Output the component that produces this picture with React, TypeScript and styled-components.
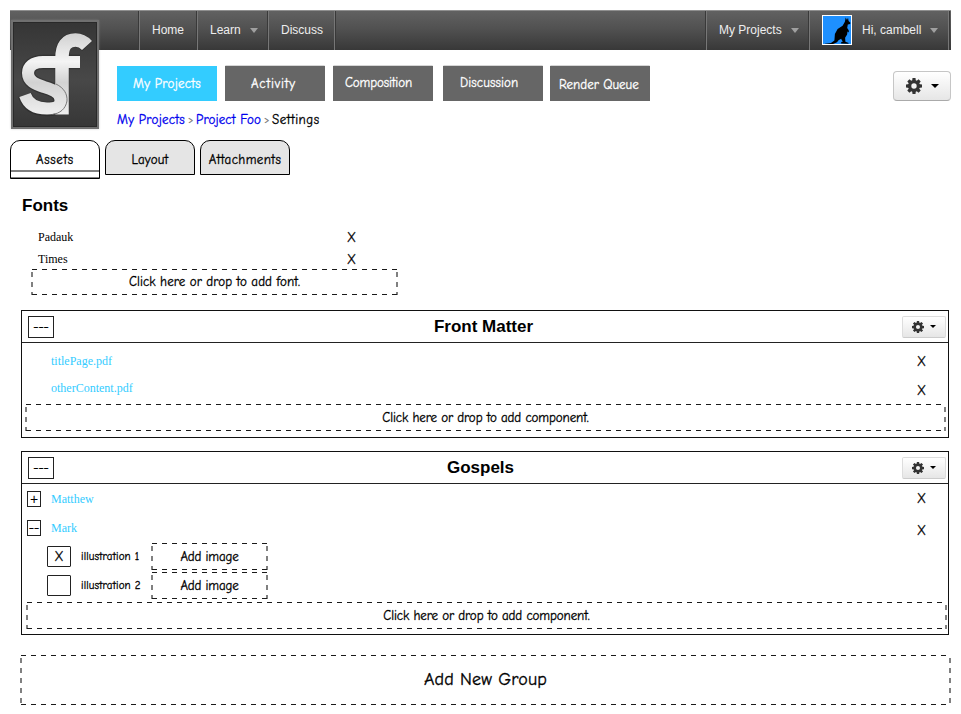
import React from 'react';
import styled, { createGlobalStyle, css } from 'styled-components';

const GlobalStyle = createGlobalStyle`
  * { box-sizing: border-box; }
  body { margin: 0; background: #fff; color: #000; }
`;

const hand = css`
  font-family: "Comic Neue", Lato, sans-serif;
  font-variant-ligatures: none;
  -webkit-text-stroke: 0.3px currentColor;
`;

const Hand = styled.span<{ $size?: number; $track?: number; $color?: string }>`
  ${hand}
  font-size: ${p => p.$size ?? 13}px;
  line-height: 20px;
  letter-spacing: ${p => p.$track ?? 0}px;
  color: ${p => p.$color ?? '#000'};
  white-space: nowrap;
`;

const Page = styled.div`
  width: 961px;
  height: 714px;
  padding: 10px 10px 0;
  overflow: hidden;
`;

const NavBar = styled.nav`
  position: relative;
  display: flex;
  height: 40px;
  padding: 0 1px 0 129px;
  border-top: 1px solid #8f8f8f;
  background: linear-gradient(#616161, #515151 45%, #383838);
`;

const NavItem = styled.div<{ $width: number }>`
  display: flex;
  align-items: center;
  width: ${p => p.$width}px;
  padding: 0 0 2px 12px;
  border-left: 1px solid #777;
  box-shadow: -1px 0 0 #393939;
  font: 12px "Liberation Sans", sans-serif;
  color: #eee;
  white-space: nowrap;
`;

const NavEdge = styled.div<{ $push?: boolean }>`
  width: 2px;
  border-left: 1px solid #777;
  border-right: 1px solid #393939;
  margin-right: ${p => (p.$push ? 'auto' : '0')};
`;

const NavCaret = styled.i`
  margin: 1px 0 0 9px;
  border: 4.5px solid transparent;
  border-top: 5px solid #a0a0a0;
  border-bottom: 0;
`;

const Avatar = styled.svg`
  width: 30px;
  height: 30px;
  margin: 1px 10px 0 0;
  border: 1px solid #fff;
  background: #1e90ff;
`;

const Logo = styled.svg`
  position: absolute;
  left: 1px;
  top: 9px;
  width: 88px;
  height: 110px;
  filter: drop-shadow(0 0 1px #9997);
`;

const Toolbar = styled.div`
  display: flex;
  height: 51px;
  padding: 16px 0 0 107px;
`;

const ProjectTab = styled.div<{ $active?: boolean; $after: number; $x: number; $y: number }>`
  width: 100px;
  height: 35px;
  margin-right: ${p => p.$after}px;
  padding: ${p => p.$y}px 0 0 ${p => p.$x}px;
  background: ${p => (p.$active ? '#33ccff' : '#666')};
  box-shadow: ${p => (p.$active ? 'none' : '0 -1px 0 -0.4px #bbb')};
`;

const GearButton = styled.div<{ $large?: boolean }>`
  display: flex;
  align-items: center;
  justify-content: center;
  gap: ${p => (p.$large ? 9 : 6)}px;
  width: ${p => (p.$large ? 58 : 44)}px;
  height: ${p => (p.$large ? 30 : 22)}px;
  margin: ${p => (p.$large ? '5px 0 0 auto' : '0 2px 0 0')};
  border: 1px solid ${p => (p.$large ? '#c6c6c6' : '#ddd')};
  border-bottom-color: ${p => (p.$large ? '#aaa' : '#ccc')};
  border-radius: ${p => (p.$large ? 4 : 2)}px;
  background: linear-gradient(#fff, #e6e6e6);
`;

const GearIcon = styled.svg<{ $large?: boolean }>`
  width: ${p => (p.$large ? 16 : 12)}px;
  height: ${p => (p.$large ? 16 : 12)}px;
  fill: #333;
`;

const GearCaret = styled.i<{ $large?: boolean }>`
  border: ${p => (p.$large ? 4 : 3)}px solid transparent;
  border-top-color: #000;
  border-bottom: 0;
`;

const Breadcrumbs = styled.div`
  display: flex;
  height: 39px;
  padding: 9px 0 0 107px;
`;

const Crumb = styled(Hand)<{ $width: number }>`
  width: ${p => p.$width}px;
`;

const SubTabs = styled.div`
  display: flex;
  gap: 5px;
  height: 39px;
`;

const SubTab = styled.div<{ $active?: boolean }>`
  display: flex;
  flex-direction: column;
  justify-content: flex-end;
  align-items: center;
  width: 90px;
  height: ${p => (p.$active ? 39 : 35)}px;
  border: 1px solid #000;
  border-radius: 10px 10px 0 0;
  background: ${p => (p.$active ? '#fff' : '#e5e5e5')};
  padding-bottom: ${p => (p.$active ? 0 : 4)}px;
`;

const TabFoot = styled.div`
  align-self: stretch;
  height: 8px;
  border-top: 2px solid #808080;
  border-bottom: 1px solid #808080;
`;

const Heading = styled.h2<{ $nudge?: number }>`
  margin: 0;
  padding-right: ${p => p.$nudge ?? 0}px;
  font: bold 17px/20px "Liberation Sans", sans-serif;
`;

const FontSection = styled.section`
  height: 131px;
  padding: 17px 0 0 12px;
`;

const FontList = styled.div`
  padding: 10px 0 0 16px;
`;

const FontRow = styled.div`
  display: flex;
  height: 22px;
  align-items: center;
  font: 12px "Liberation Serif", serif;
`;

const FontName = styled.span`
  width: 309px;
`;

const dashX = 'repeating-linear-gradient(90deg, transparent 0 1px, #1a1a1a 1px 6px, transparent 6px 10px)';
const dashY = 'repeating-linear-gradient(transparent 0 3px, #808080 3px 8px, transparent 8px 10px)';

const DropZone = styled.div<{ $width: number; $height: number; $ml?: number; $mt?: number }>`
  display: flex;
  flex: none;
  align-items: center;
  justify-content: center;
  width: ${p => p.$width}px;
  height: ${p => p.$height}px;
  margin: ${p => p.$mt ?? 0}px 0 0 ${p => p.$ml ?? 0}px;
  background:
    ${dashX} 0 0 / 100% 1px no-repeat,
    ${dashX} 0 100% / 100% 1px no-repeat,
    ${dashY} 0 0 / 2px 100% no-repeat,
    ${dashY} 100% 0 / 2px 100% no-repeat;
`;

const Group = styled.section<{ $height: number; $after: number }>`
  width: 928px;
  height: ${p => p.$height}px;
  margin: 0 0 ${p => p.$after}px 11px;
  border: 1px solid #111;
`;

const GroupHeader = styled.header`
  display: grid;
  grid-template-columns: 50px 1fr 50px;
  align-items: center;
  justify-items: center;
  height: 32px;
  border-bottom: 1px solid #222;
`;

const HeaderStart = styled.div`
  justify-self: start;
  padding-left: 6px;
`;

const HeaderEnd = styled.div`
  justify-self: end;
`;

const ToggleBox = styled.div<{ $w: number; $h: number; $size?: number; $soft?: boolean }>`
  ${hand}
  display: flex;
  align-items: center;
  justify-content: center;
  width: ${p => p.$w}px;
  height: ${p => p.$h}px;
  border: 1px solid #222;
  border-radius: ${p => (p.$soft ? 1 : 0)}px;
  font-size: ${p => p.$size ?? 13}px;
  line-height: 14px;
`;

const PlusBox = styled(ToggleBox)`
  font-family: "Liberation Sans", sans-serif;
  -webkit-text-stroke: 0;
`;

const GroupRow = styled.div<{ $height: number }>`
  display: flex;
  align-items: center;
  height: ${p => p.$height}px;
  padding-left: 5px;
`;

const Toggle = styled.div`
  width: 24px;
`;

const FileName = styled.span`
  flex: 1;
  font: 12px/16px "Liberation Serif", serif;
  color: #33ccff;
`;

const Remove = styled.span<{ $down?: number }>`
  ${hand}
  width: 31px;
  font-size: 13px;
  line-height: 16px;
  padding-top: ${p => p.$down ?? 0}px;
`;

const Illustration = styled.div`
  display: flex;
  align-items: center;
  height: 29px;
  padding: 0 0 2px 25px;
`;

const IllustrationName = styled.div`
  width: 80px;
  padding-left: 10px;
`;

function Kangaroo() {
  return (
    <Avatar viewBox="0 0 28 28">
      <path d="M22.700 1.500 24 4 25 1.800l.6 3.200 1.800 1.800-.3 1.200-2.300.5-.6 3.400 1.500 2.400.2 2.300-1.400-1.100-.4 3-2 3.200.3 4 3.300 1.300-.4.8-7.200-.2.2-1.500 1.500-.3-1.700-3-2.600 1.400-1.500 2-4 1.800-8 .3 0-.6 6-.8 3.400-2.500.5-6.500 2.700-4.800 5-3.400 2.300-4Z" fill="#000" />
    </Avatar>
  );
}

function SfLogo() {
  return (
    <Logo viewBox="0 0 88 110">
      <defs>
        <linearGradient id="plate" x1="0" y1="0" x2="0" y2="1">
          <stop offset="0" stopColor="#353535" />
          <stop offset=".55" stopColor="#484848" />
          <stop offset="1" stopColor="#363636" />
        </linearGradient>
        <linearGradient id="metal" gradientUnits="userSpaceOnUse" x1="0" y1="12" x2="0" y2="96">
          <stop offset="0" stopColor="#cfcfcf" />
          <stop offset=".35" stopColor="#f4f4f4" />
          <stop offset=".6" stopColor="#d2d2d2" />
          <stop offset="1" stopColor="#f0f0f0" />
        </linearGradient>
      </defs>
      <rect x="1" y="1" width="86" height="107" fill="url(#plate)" stroke="#707070" strokeWidth="2" />
      <rect x="2.500" y="2.500" width="83" height="104" fill="none" stroke="#292929" />
      <g fill="none" stroke="#222" strokeOpacity=".45" strokeWidth="14.500">
        <path d="M51 95V37Q51 20 64 20Q71 20 76.500 26" />
        <path d="M69 42H32C22 42 17 47 17 53C17 61 24 64 33 67C44 70 49.500 74 49.500 80C49.500 86 46 89 36 89C24 89 17 85 14 75" />
      </g>
      <path d="M51 94.500V38Q51 20 64.500 20Q71 20 76 25.500" fill="none" stroke="url(#metal)" strokeWidth="13.500" />
      <path d="M69 42H32C22 42 17 47 17 53C17 61 24 64 33 67C44 70 49.500 74 49.500 80C49.500 86 46 88.500 36 88.500C24 88.500 17 84 14 75" fill="none" stroke="url(#metal)" strokeWidth="12" />
      <path d="M45 64C53 68 56.500 74 56 81C54.500 89 49 93.500 41 94.500" fill="none" stroke="#6c6c6c" strokeWidth=".9" />
    </Logo>
  );
}

const toothAngles = [0, 45, 90, 135];

function Gear({ large }: { large?: boolean }) {
  return (
    <GearButton $large={large}>
      <GearIcon $large={large} viewBox="0 0 16 16">
        {toothAngles.map(a => (
          <path key={a} transform={`rotate(${a} 8 8)`} d="M6.500 0h3l.4 3.500h-3.800zM6.500 16h3l.4-3.500h-3.800z" />
        ))}
        <path fillRule="evenodd" d="M8 2a6 6 0 1 1 0 12a6 6 0 1 1 0-12zM8 5.300a2.700 2.700 0 1 0 0 5.400a2.700 2.700 0 1 0 0-5.400z" />
      </GearIcon>
      <GearCaret $large={large} />
    </GearButton>
  );
}

function GroupTitle({ title, nudge }: { title: string; nudge: number }) {
  return (
    <GroupHeader>
      <HeaderStart><ToggleBox $w={26} $h={22}>---</ToggleBox></HeaderStart>
      <Heading $nudge={nudge}>{title}</Heading>
      <HeaderEnd><Gear /></HeaderEnd>
    </GroupHeader>
  );
}

export default function App() {
  return (
    <Page>
      <GlobalStyle />
      <NavBar>
        <NavItem $width={58}>Home</NavItem>
        <NavItem $width={71}>Learn<NavCaret /></NavItem>
        <NavItem $width={66}>Discuss</NavItem>
        <NavEdge $push />
        <NavItem $width={103}>My Projects<NavCaret /></NavItem>
        <NavItem $width={139}><Kangaroo />Hi, cambell<NavCaret /></NavItem>
        <NavEdge />
        <SfLogo />
      </NavBar>

      <Toolbar>
        <ProjectTab $active $after={8} $x={16} $y={8}><Hand $color="#fff" $track={0.26}>My Projects</Hand></ProjectTab>
        <ProjectTab $after={8} $x={26} $y={8}><Hand $color="#fff" $track={0.8}>Activity</Hand></ProjectTab>
        <ProjectTab $after={10} $x={12} $y={7}><Hand $color="#fff" $track={-0.13}>Composition</Hand></ProjectTab>
        <ProjectTab $after={7} $x={17} $y={7}><Hand $color="#fff" $track={0.1}>Discussion</Hand></ProjectTab>
        <ProjectTab $after={0} $x={9} $y={9}><Hand $color="#fff">Render Queue</Hand></ProjectTab>
        <Gear large />
      </Toolbar>

      <Breadcrumbs>
        <Crumb $width={71} $color="#00e" $track={0.26}>My Projects</Crumb>
        <Crumb $width={8} $color="#777" $size={10}>&gt;</Crumb>
        <Crumb $width={68} $color="#00e" $track={0.15}>Project Foo</Crumb>
        <Crumb $width={8} $color="#777" $size={10}>&gt;</Crumb>
        <Crumb $width={60} $track={0.5}>Settings</Crumb>
      </Breadcrumbs>

      <SubTabs>
        <SubTab $active><Hand $track={0.65}>Assets</Hand><TabFoot /></SubTab>
        <SubTab><Hand $track={0.2}>Layout</Hand></SubTab>
        <SubTab><Hand $track={0.4}>Attachments</Hand></SubTab>
      </SubTabs>

      <FontSection>
        <Heading>Fonts</Heading>
        <FontList>
          <FontRow><FontName>Padauk</FontName><Remove $down={2}>X</Remove></FontRow>
          <FontRow><FontName>Times</FontName><Remove $down={2}>X</Remove></FontRow>
        </FontList>
        <DropZone $width={367} $height={26} $ml={9} $mt={-1}><Hand $track={0.07}>Click here or drop to add font.</Hand></DropZone>
      </FontSection>

      <Group $height={128} $after={13}>
        <GroupTitle title="Front Matter" nudge={3} />
        <GroupRow $height={36}><Toggle /><FileName>titlePage.pdf</FileName><Remove $down={1}>X</Remove></GroupRow>
        <GroupRow $height={18}><Toggle /><FileName>otherContent.pdf</FileName><Remove $down={5}>X</Remove></GroupRow>
        <DropZone $width={921} $height={27} $ml={3} $mt={7}><Hand $track={-0.1}>Click here or drop to add component.</Hand></DropZone>
      </Group>

      <Group $height={184} $after={20}>
        <GroupTitle title="Gospels" nudge={9} />
        <GroupRow $height={29}><Toggle><PlusBox $w={14} $h={16} $size={14}>+</PlusBox></Toggle><FileName>Matthew</FileName><Remove>X</Remove></GroupRow>
        <GroupRow $height={30}><Toggle><ToggleBox $w={14} $h={16}>--</ToggleBox></Toggle><FileName>Mark</FileName><Remove $down={5}>X</Remove></GroupRow>
        <Illustration>
          <ToggleBox $w={24} $h={21} $soft>X</ToggleBox>
          <IllustrationName><Hand $size={11} $track={0.15}>illustration 1</Hand></IllustrationName>
          <DropZone $width={117} $height={27}><Hand $track={-0.15}>Add image</Hand></DropZone>
        </Illustration>
        <Illustration>
          <ToggleBox $w={24} $h={21} $soft />
          <IllustrationName><Hand $size={11} $track={0.15}>illustration 2</Hand></IllustrationName>
          <DropZone $width={117} $height={27}><Hand $track={-0.15}>Add image</Hand></DropZone>
        </Illustration>
        <DropZone $width={921} $height={27} $ml={4} $mt={1}><Hand $track={-0.1}>Click here or drop to add component.</Hand></DropZone>
      </Group>

      <DropZone $width={931} $height={50} $ml={10}><Hand $size={18} $track={0.15}>Add New Group</Hand></DropZone>
    </Page>
  );
}
